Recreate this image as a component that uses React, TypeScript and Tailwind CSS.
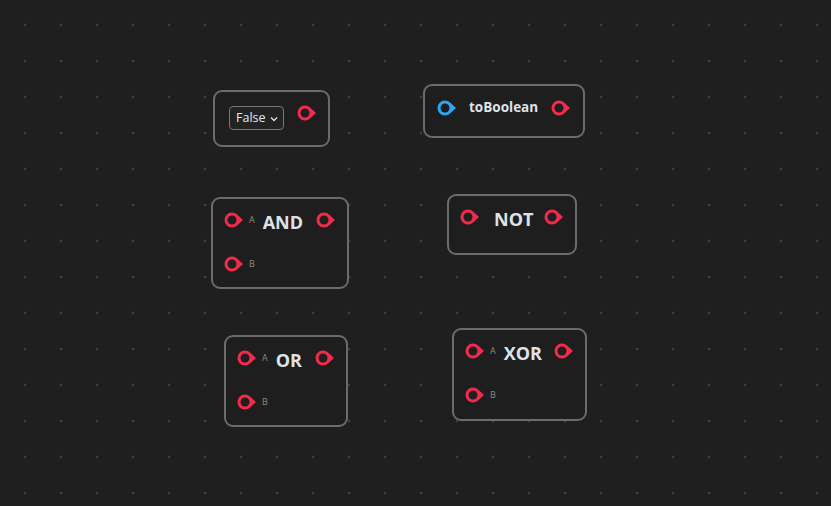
import React from "react";

const Port = ({ color = "#f22a4c" }: { color?: string }) => (
    <svg width="20" height="16" viewBox="0 0 20 16" className="shrink-0 block">
        <path d="M13.11 2.52 L19 8 L13.11 13.48 A7.5 7.5 0 1 1 13.11 2.52 Z" fill={color} />
        <circle cx="8" cy="8" r="4.5" fill="#1f1f1f" />
    </svg>
);

const Title = ({ children, className = "" }: { children: React.ReactNode; className?: string }) => (
    <div className={"text-[18px] font-bold leading-none text-[#dfe3e8] translate-y-[2px] " + className}>{children}</div>
);

const PinLabel = ({ children }: { children: React.ReactNode }) => (
    <span className="ml-[5px] text-[9px] leading-none text-[#8a8a8a] -translate-y-[1px]">{children}</span>
);

const nodeBase = "absolute rounded-[9px] border-2 border-[#6b6b6b] bg-[#1e1e1e]";

// two-input logic gate: A/B inputs, single output
const GateNode = ({ label, className, titleGap }: { label: string; className: string; titleGap: string }) => (
    <div className={nodeBase + " " + className + " pl-[11px] pr-[11px] pt-[13px]"}>
        <div className="flex h-4 items-center">
            <Port />
            <PinLabel>A</PinLabel>
            <Title className={titleGap}>{label}</Title>
            <div className="ml-auto">
                <Port />
            </div>
        </div>
        <div className="mt-[28px] flex h-4 items-center">
            <Port />
            <PinLabel>B</PinLabel>
        </div>
    </div>
);

export default function App() {
    return (
        <div
            className="relative h-[506px] w-[831px] overflow-hidden bg-[#1f1f1f] bg-[radial-gradient(circle,#3d3d3d_1px,transparent_1.7px)] bg-[length:36px_36px] bg-[position:7px_7px]"
            style={{ fontFamily: '"Open Sans", "Noto Sans", sans-serif' }}
        >
            {/* boolean constant */}
            <div className={nodeBase + " left-[213px] top-[90px] h-[57px] w-[117px] pl-[14px] pr-[11px] pt-[13px]"}>
                <div className="flex items-start">
                    <div className="mt-[1px] flex h-[24px] w-[55px] items-center justify-between rounded-[4px] border border-[#777] bg-[#232323] pl-[6px] pr-[5px]">
                        <span className="text-[12.5px] leading-none text-[#e6ebf0]">False</span>
                        <svg width="8" height="6" viewBox="0 0 8 6" className="mt-[1px]">
                            <path d="M1 1.5 L4 4.5 L7 1.5" fill="none" stroke="#e0e0e0" strokeWidth="1.4" />
                        </svg>
                    </div>
                    <div className="ml-auto">
                        <Port />
                    </div>
                </div>
            </div>

            {/* toBoolean */}
            <div className={nodeBase + " left-[423px] top-[84px] h-[54px] w-[162px] pl-[12px] pr-[12px] pt-[14px]"}>
                <div className="flex h-4 items-center">
                    <Port color="#2ea6f2" />
                    <span className="ml-[12px] text-[13.5px] font-bold leading-none text-[#dfe3e8]">toBoolean</span>
                    <div className="ml-auto">
                        <Port />
                    </div>
                </div>
            </div>

            <GateNode label="AND" className="left-[211px] top-[197px] h-[92px] w-[138px]" titleGap="ml-[8px]" />

            {/* NOT */}
            <div className={nodeBase + " left-[447px] top-[194px] h-[61px] w-[130px] pl-[11px] pr-[11px] pt-[13px]"}>
                <div className="flex h-4 items-center">
                    <Port />
                    <Title className="ml-[14px]">NOT</Title>
                    <div className="ml-auto">
                        <Port />
                    </div>
                </div>
            </div>

            <GateNode label="OR" className="left-[224px] top-[335px] h-[92px] w-[124px]" titleGap="ml-[8px]" />
            <GateNode label="XOR" className="left-[452px] top-[328px] h-[93px] w-[135px]" titleGap="ml-[8px]" />
        </div>
    );
}
